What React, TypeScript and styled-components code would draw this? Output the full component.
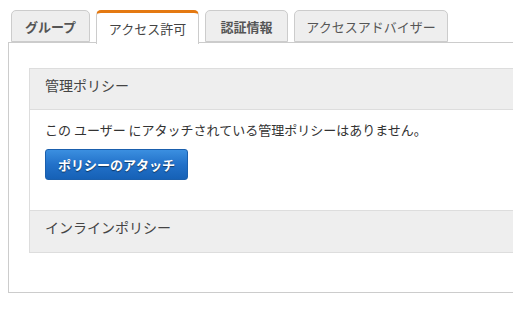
import styled, { createGlobalStyle } from "styled-components";

const GlobalStyle = createGlobalStyle`
  html, body {
    margin: 0;
    padding: 0;
    background: #fff;
    overflow: hidden;
  }
  body {
    font-family: "Noto Sans CJK JP", "Noto Sans", "Liberation Sans", sans-serif;
    color: #333;
  }
`;

const Page = styled.div`
  width: 513px;
  height: 310px;
  overflow: hidden;
  padding-top: 10px;
  box-sizing: border-box;
`;

const TabBar = styled.div`
  display: flex;
  gap: 6px;
  padding-left: 11px;
  position: relative;
  z-index: 1;
`;

const Tab = styled.div<{ $active?: boolean; $bold?: boolean; $w: number }>`
  width: ${(p) => p.$w}px;
  box-sizing: border-box;
  height: ${(p) => (p.$active ? 34 : 32)}px;
  margin-bottom: ${(p) => (p.$active ? -2 : 0)}px;
  display: flex;
  align-items: center;
  justify-content: center;
  font-size: 13px;
  font-weight: ${(p) => (p.$bold ? 700 : 400)};
  color: ${(p) => (p.$active ? "#444" : "#555")};
  background: ${(p) => (p.$active ? "#fff" : "#eee")};
  border: 1px solid #ccc;
  border-bottom: ${(p) => (p.$active ? "none" : "1px solid #ccc")};
  border-top: ${(p) => (p.$active ? "3px solid #e47911" : "1px solid #ccc")};
  border-radius: 5px 5px 0 0;
  padding-top: ${(p) => (p.$active ? 0 : 1)}px;
  cursor: pointer;
`;

const Panel = styled.div`
  margin-left: 8px;
  width: 600px;
  height: 251px;
  box-sizing: border-box;
  border: 1px solid #ccc;
  padding: 25px 0 0 20px;
  background: #fff;
`;

const SectionBox = styled.div`
  border: 1px solid #ddd;
  border-right: none;
`;

const SectionHeader = styled.div<{ $divider?: boolean }>`
  background: #eee;
  font-size: 14px;
  line-height: 20px;
  color: #444;
  padding: 6px 15px ${(p) => (p.$divider ? 15 : 14)}px;
  border-top: ${(p) => (p.$divider ? "1px solid #ddd" : "none")};
  border-bottom: ${(p) => (p.$divider ? "none" : "1px solid #ddd")};
`;

const SectionBody = styled.div`
  padding: 12px 15px 30px;
`;

const Message = styled.div`
  font-size: 13px;
  line-height: 16px;
  color: #333;
  margin-bottom: 11px;
`;

const PrimaryButton = styled.button`
  width: 143px;
  height: 31px;
  border: 1px solid #1a5fad;
  border-radius: 3px;
  background: linear-gradient(to bottom, #3b8fe0 0%, #2271c9 50%, #1661b6 100%);
  color: #fff;
  font-family: inherit;
  font-size: 13px;
  font-weight: 700;
  text-shadow: 0 1px 1px rgba(0, 0, 0, 0.5);
  padding: 0;
  cursor: pointer;
`;

const tabs = [
  { label: "グループ", w: 79, bold: true },
  { label: "アクセス許可", w: 103, active: true },
  { label: "認証情報", w: 83, bold: true },
  { label: "アクセスアドバイザー", w: 154 },
];

export default function App() {
  return (
    <>
      <GlobalStyle />
      <Page>
        <TabBar>
          {tabs.map((t) => (
            <Tab key={t.label} $w={t.w} $active={t.active} $bold={t.bold}>
              {t.label}
            </Tab>
          ))}
        </TabBar>
        <Panel>
          <SectionBox>
            <SectionHeader>管理ポリシー</SectionHeader>
            <SectionBody>
              <Message>この ユーザー にアタッチされている管理ポリシーはありません。</Message>
              <PrimaryButton>ポリシーのアタッチ</PrimaryButton>
            </SectionBody>
            <SectionHeader $divider>インラインポリシー</SectionHeader>
          </SectionBox>
        </Panel>
      </Page>
    </>
  );
}
